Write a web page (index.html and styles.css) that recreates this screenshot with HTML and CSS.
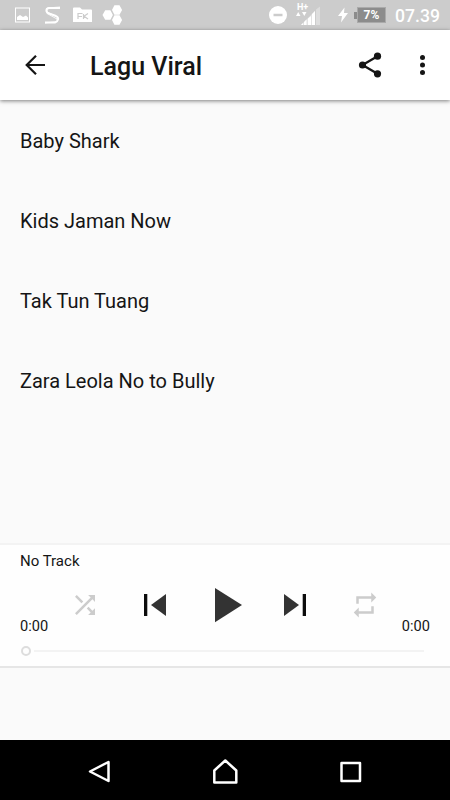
FILE: index.html
```html
<!DOCTYPE html>
<html lang="id">
	<head>
		<meta charset="UTF-8" />
		<meta name="viewport" content="width=device-width, initial-scale=1.0" />
		<title>Lagu Viral</title>
		<link rel="stylesheet" href="styles.css">
	</head>
	<body>
		<div class="status-bar">
			<svg class="status-left" width="130" height="30" viewBox="0 0 130 30">
				<!-- gallery -->
				<rect x="15.500" y="8" width="14" height="14" fill="none" stroke="#fff" />
				<path d="M17 20v-3l3-2 3 2 3-1.500 2 2V20z" fill="#fff" />
				<!-- sketch -->
				<path d="M60 8H49c-3.500.5-3.500 4 0 5.500l7 2.500c3.500 1.500 2.500 5.500-1 6.500H45" fill="none" stroke="#fff" stroke-width="1.900" />
				<path d="M60 7L47 8v5.500l10 5.500M45 23l12-1.500v-5L47 12" fill="none" stroke="#fff" stroke-width=".8" />
				<!-- folder -->
				<path d="M73 22V8.500q0-1 1-1h6l2 2h9q1 0 1 1V22z" fill="#fff" />
				<path d="M78 19v-5.500h4.500M78 16.500h4M88 13.500l-4 2.700 4 2.800M83.500 14v5" fill="none" stroke="#ccc" stroke-width="1.200" />
				<!-- hexagons -->
				<path d="M102.500 15l2.700-4.700h5.200l2.500 4.700-2.500 4.700h-5.200zM112 10l2.400-4.700h5.100l2.600 4.700-2.600 4.700h-5.100zM112 20l2.400-4.700h5.100l2.600 4.700-2.600 4.700h-5.100z" fill="#fff" />
			</svg>
			<div class="status-right">
				<svg width="20" height="30" viewBox="0 0 20 30">
					<circle cx="10" cy="15" r="9" fill="#fff" />
					<path d="M5.500 15h9" stroke="#ccc" stroke-width="2.500" />
				</svg>
				<div class="signal">
					<span class="network">H+</span>
					<svg width="26" height="30" viewBox="0 0 26 30">
						<path d="M0 16l2.200-4 2.300 4zM6 12h4.500l-2.200 4z" fill="#fff" />
						<path d="M20 25V9.500l4-3V25z" fill="#ddd" />
						<path d="M5 25h2v-2zM8 25h2.500v-5.500L8 22zM12 25h3v-9l-3 2.500zM16 25h3V11l-3 3z" fill="#fff" />
						<path d="M5 25h14V11z" fill="#fff" opacity=".45" />
					</svg>
				</div>
				<svg class="bolt" width="10" height="30" viewBox="0 0 10 30">
					<path d="M6.500 7.500L0 16h4l-1 6.500L10 13H6z" fill="#fff" />
				</svg>
				<div class="battery">
					<span class="tip"></span>
					<span class="level">7%</span>
				</div>
				<div class="clock">07.39</div>
			</div>
		</div>

		<header class="app-bar">
			<svg class="back" width="30" height="30" viewBox="0 0 30 30">
				<path d="M25 15H7M16 5.700L6.700 15l9.300 9.300" fill="none" stroke="#151515" stroke-width="2.200" />
			</svg>
			<h1>Lagu Viral</h1>
			<svg class="share" width="30" height="30" viewBox="0 0 30 30">
				<path d="M22.500 6.200L7.500 15l15 8.800" fill="none" stroke="#151515" stroke-width="2.300" />
				<circle cx="22.500" cy="6.200" r="3.600" fill="#151515" />
				<circle cx="7.500" cy="15" r="3.600" fill="#151515" />
				<circle cx="22.500" cy="23.800" r="3.600" fill="#151515" />
			</svg>
			<svg class="more" width="10" height="30" viewBox="0 0 10 30">
				<circle cx="4.500" cy="7.500" r="2.500" fill="#151515" />
				<circle cx="4.500" cy="15" r="2.500" fill="#151515" />
				<circle cx="4.500" cy="22.500" r="2.500" fill="#151515" />
			</svg>
		</header>

		<ul class="songs">
			<li>Baby Shark</li>
			<li>Kids Jaman Now</li>
			<li>Tak Tun Tuang</li>
			<li>Zara Leola No to Bully</li>
		</ul>

		<div class="player">
			<p class="track">No Track</p>
			<div class="controls">
				<svg width="30" height="30" viewBox="0 0 24 24">
					<path d="M10.590 9.170L5.410 4 4 5.410l5.170 5.170 1.420-1.410zM14.500 4l2.040 2.040L4 18.590 5.410 20 17.960 7.460 20 9.500V4h-5.500zm.33 9.410l-1.410 1.410 3.130 3.130L14.500 20H20v-5.500l-2.040 2.040-3.130-3.130z" fill="#ccc" />
				</svg>
				<svg width="30" height="30" viewBox="0 0 30 30">
					<path d="M4 4h3.300v22H4z" fill="#0c0c0c" />
					<path d="M26 4v22L11 15z" fill="#333" />
				</svg>
				<svg width="40" height="40" viewBox="0 0 40 40">
					<path d="M10 3l27 17-27 17.200z" fill="#333" />
				</svg>
				<svg width="30" height="30" viewBox="0 0 30 30">
					<path d="M4 4v22l15-11z" fill="#333" />
					<path d="M22.700 4H26v22h-3.300z" fill="#0c0c0c" />
				</svg>
				<svg width="30" height="30" viewBox="0 0 24 24">
					<path d="M7 7h10v3l4-4-4-4v3H5v6h2V7zm10 10H7v-3l-4 4 4 4v-3h12v-6h-2v4z" fill="#ccc" />
				</svg>
			</div>
			<div class="times">
				<span>0:00</span>
				<span>0:00</span>
			</div>
			<div class="seek">
				<span class="thumb"></span>
				<span class="line"></span>
			</div>
		</div>

		<nav class="nav-bar">
			<svg width="30" height="30" viewBox="0 0 30 30">
				<path d="M23.500 7v19L5 16.500z" />
			</svg>
			<svg width="30" height="30" viewBox="0 0 30 30">
				<path d="M15.300 5.500l11 10v12h-22v-12z" />
			</svg>
			<svg width="30" height="30" viewBox="0 0 30 30">
				<path d="M6.500 8H25v18H6.500z" />
			</svg>
		</nav>
	</body>
</html>
```

FILE: styles.css
```css
* {
	margin: 0;
	padding: 0;
	box-sizing: border-box;
	font-family: Roboto, sans-serif;
}

body {
	width: 450px;
	height: 800px;
	display: flex;
	flex-direction: column;
	background-color: #fafafa;
	color: #151515;
	overflow: hidden;
}

svg {
	display: block;
	flex-shrink: 0;
}

.status-bar {
	height: 30px;
	display: flex;
	justify-content: space-between;
	background-color: #ccc;
	color: #fff;
}

.status-right {
	display: flex;
	align-items: center;
	padding-right: 10px;
}

.signal {
	position: relative;
	margin-left: 8px;
}

.network {
	position: absolute;
	top: 3px;
	left: 1px;
	font-size: 9px;
	line-height: 9px;
	font-weight: 700;
}

.bolt {
	margin-left: 16px;
}

.battery {
	display: flex;
	align-items: center;
	margin-left: 6px;
}

.tip {
	width: 3px;
	height: 7px;
	background-color: #8c8c8c;
}

.level {
	width: 29px;
	height: 16px;
	border: 1px solid #aaa;
	background-color: #8c8c8c;
	font-size: 12px;
	line-height: 14px;
	font-weight: 700;
	text-align: center;
}

.clock {
	width: 45px;
	margin-left: 9px;
	padding-top: 2px;
	font-size: 17.6px;
	line-height: 29px;
	font-weight: 500;
	white-space: nowrap;
}

.app-bar {
	height: 70px;
	display: flex;
	align-items: center;
	padding: 0 22px 0 20px;
	background-color: #fff;
	box-shadow: 0 1px 4px rgba(0, 0, 0, 0.5);
}

h1 {
	flex: 1;
	margin-left: 40px;
	padding-top: 3px;
	font-size: 25px;
	line-height: 30px;
	font-weight: 500;
}

.more {
	margin-left: 33px;
}

.songs {
	flex: 1;
	padding-top: 1px;
	list-style: none;
}

.songs li {
	height: 80px;
	padding-left: 20px;
	font-size: 20px;
	line-height: 80px;
}

.player {
	height: 125px;
	margin-bottom: 72px;
	padding: 8px 20px 0;
	border-top: 2px solid #f3f3f3;
	border-bottom: 2px solid #e6e6e6;
	background-color: #fefefe;
}

.track {
	font-size: 15px;
	line-height: 17px;
}

.controls {
	height: 40px;
	margin-top: 15px;
	padding: 0 30px;
	display: grid;
	grid-template-columns: repeat(5, 70px);
	align-items: center;
	justify-items: center;
}

.times {
	display: flex;
	justify-content: space-between;
	margin-top: -8px;
	font-size: 14.6px;
	line-height: 18px;
}

.seek {
	display: flex;
	align-items: center;
	gap: 3px;
	height: 10px;
	margin-top: 11px;
	padding: 0 6px 0 1px;
}

.thumb {
	width: 10px;
	height: 10px;
	border: 2px solid #ddd;
	border-radius: 50%;
}

.line {
	flex: 1;
	height: 2px;
	background-color: #f3f3f3;
}

.nav-bar {
	height: 60px;
	display: flex;
	align-items: center;
	justify-content: space-between;
	padding: 0 85px;
	background-color: #000;
}

.nav-bar path {
	fill: none;
	stroke: #fff;
	stroke-width: 2.5;
	stroke-linejoin: round;
}
```
